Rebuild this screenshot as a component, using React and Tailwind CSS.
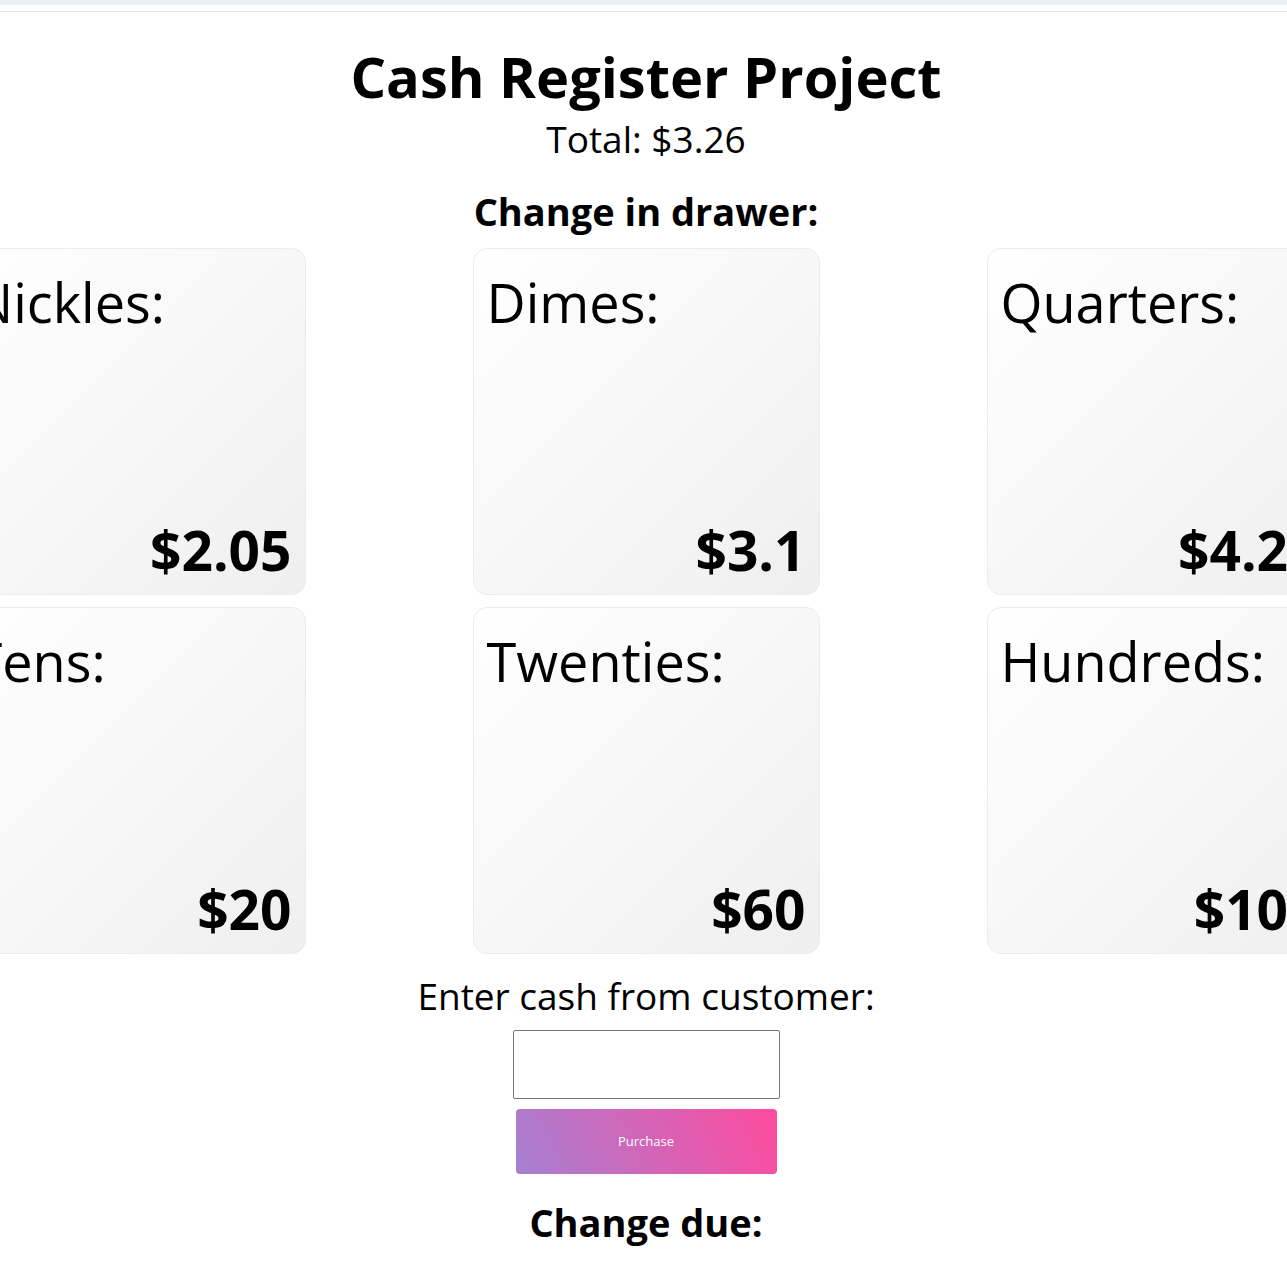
import React from "react";

const cards = [
  ["Pennies:", "$1.01"],
  ["Nickles:", "$2.05"],
  ["Dimes:", "$3.1"],
  ["Quarters:", "$4.25"],
  ["Ones:", "$90"],
  ["Fives:", "$55"],
  ["Tens:", "$20"],
  ["Twenties:", "$60"],
  ["Hundreds:", "$100"],
];

export default function App() {
  return (
    <div
      className="w-full min-h-[1287px] bg-white text-black overflow-hidden"
      style={{ fontFamily: '"Open Sans", "Noto Sans", sans-serif' }}
    >
      <div className="h-[5px] bg-[#ebeef8]" />
      <div className="h-[6px] bg-white" />
      <div className="h-px bg-[#e6e6e6]" />
      <div className="flex flex-col items-center pl-[5px]">
        <h1 className="mt-[28px] text-[56px] font-bold leading-[72px]">Cash Register Project</h1>
        <p className="mt-[4px] text-[37px] leading-[46px]">Total: $3.26</p>
        <h2 className="mt-[25px] text-[38px] font-bold leading-[48px]">Change in drawer:</h2>
        <div className="mt-[13px] w-full flex justify-center">
          <div className="shrink-0 grid grid-cols-[repeat(5,347px)] gap-x-[167px] gap-y-[12px]">
            {cards.map(([label, value]) => (
              <div
                key={label}
                className="h-[347px] rounded-[14px] border border-[#ececec] bg-gradient-to-br from-[#ffffff] to-[#efefef] flex flex-col justify-between px-[13px] pt-[17px] pb-[8px]"
              >
                <div className="text-[54px] leading-[72px]">{label}</div>
                <div className="text-[55px] font-bold leading-[72px] text-right">{value}</div>
              </div>
            ))}
          </div>
        </div>
        <p className="mt-[18px] text-[37px] leading-[48px]">Enter cash from customer:</p>
        <input
          type="text"
          className="mt-[10px] w-[267px] h-[69px] border border-[#767676] rounded-[2px] bg-white"
        />
        <button className="mt-[10px] w-[261px] h-[65px] rounded-[4px] bg-[linear-gradient(65deg,#a680d2,#ff4a9d)] text-white text-[13px]">
          Purchase
        </button>
        <h2 className="mt-[24px] text-[38px] font-bold leading-[48px]">Change due:</h2>
      </div>
    </div>
  );
}
